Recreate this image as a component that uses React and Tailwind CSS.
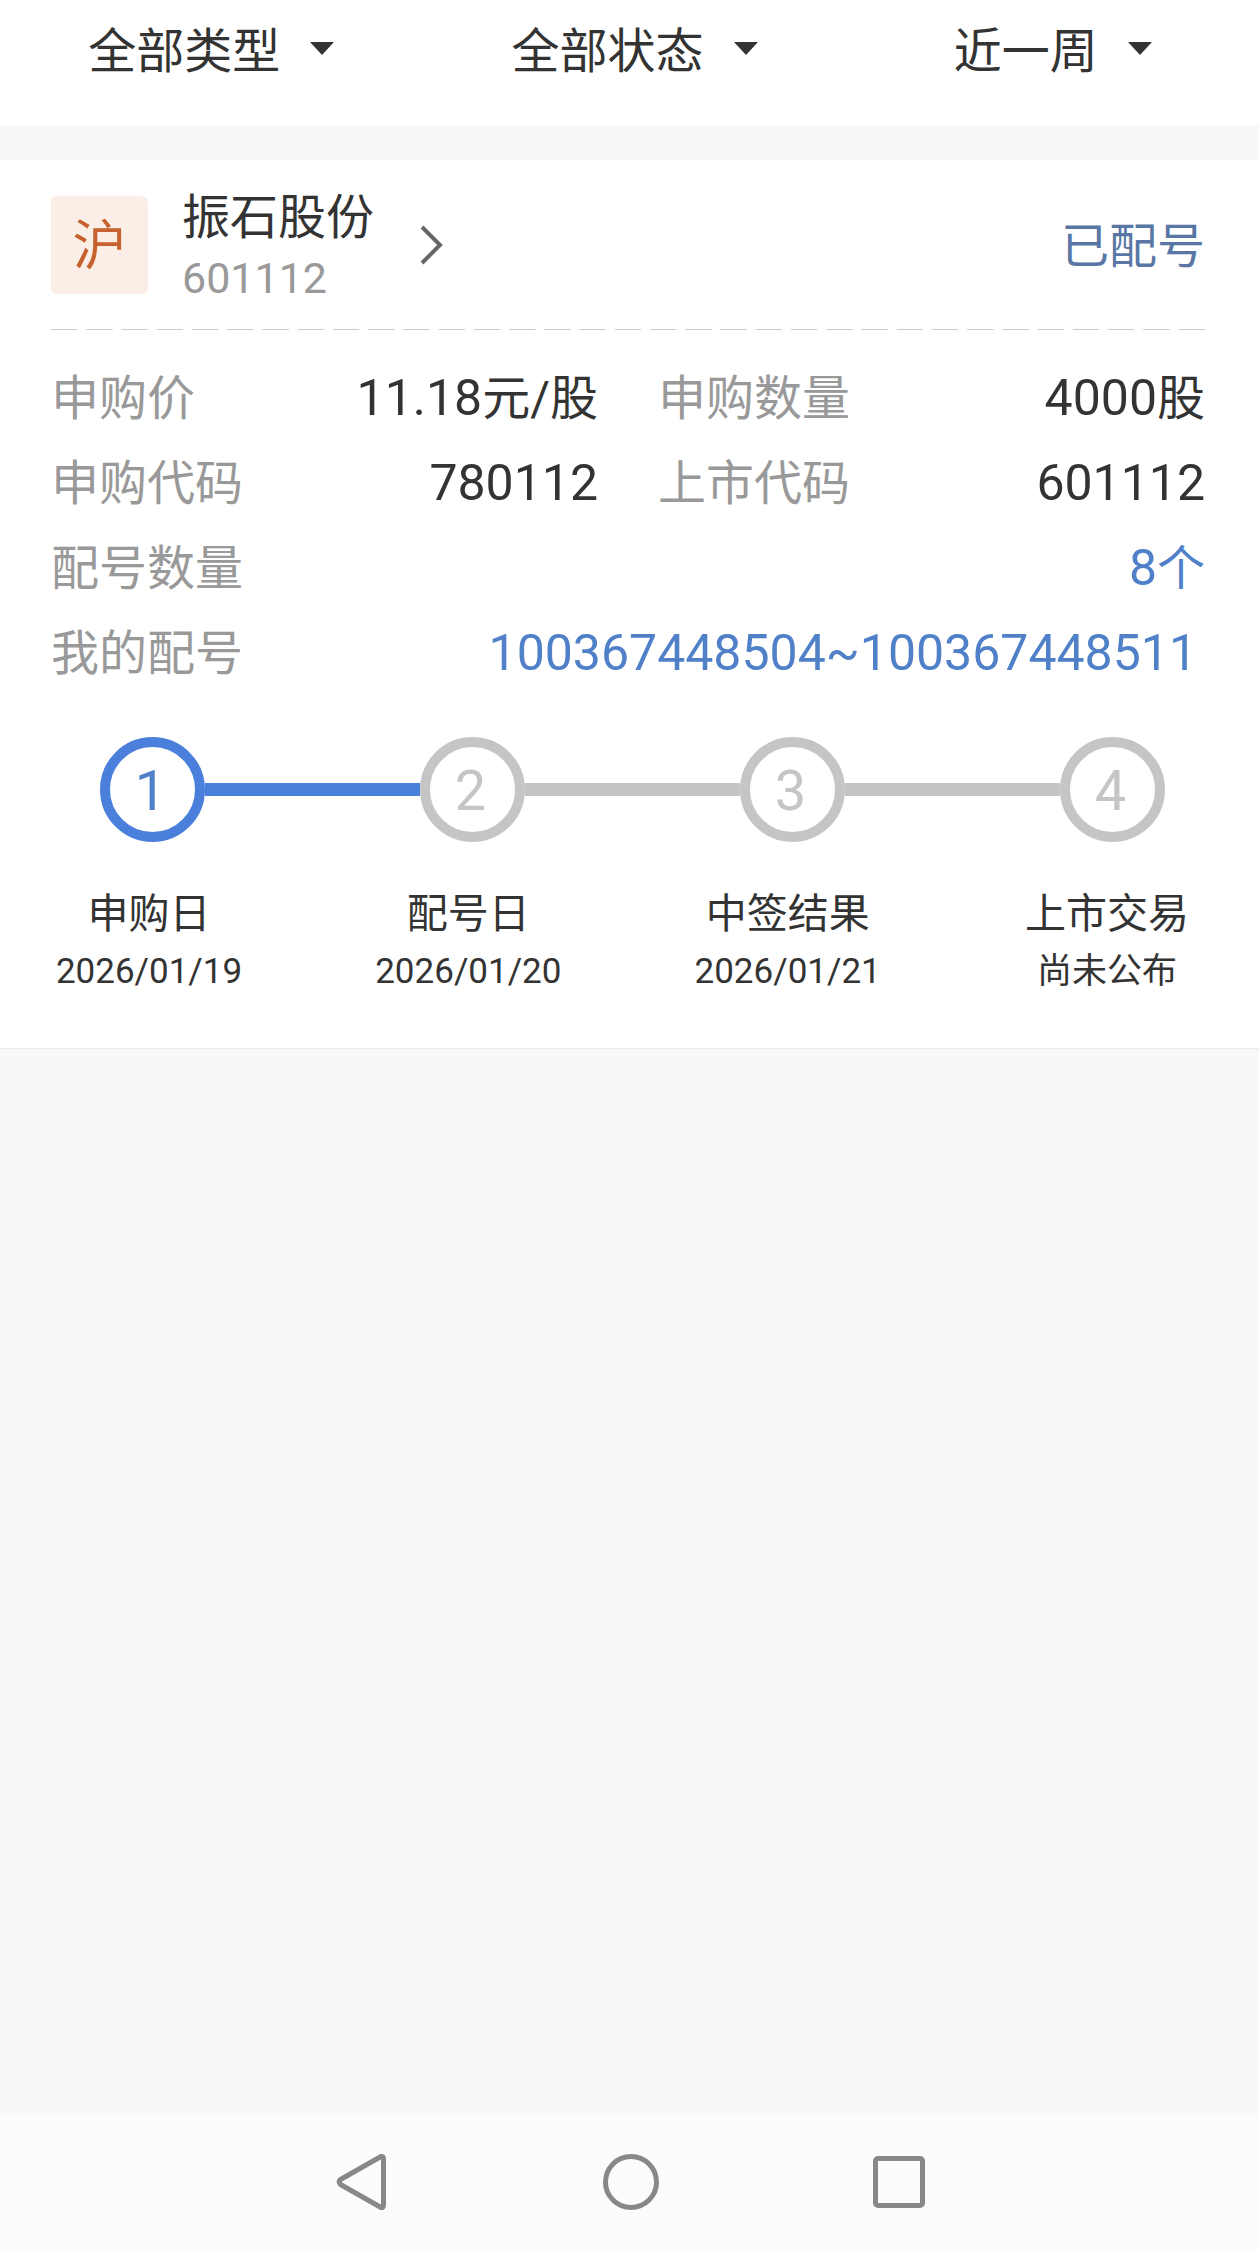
import React, { useState } from 'react'

const FILTERS = [
  { id: 'type', label: '类型', options: ['全部类型', '新股', '新债'] },
  { id: 'status', label: '状态', options: ['全部状态', '已配号', '已中签'] },
  { id: 'range', label: '时间', options: ['近一周', '近一月', '近一年'] },
]

const DETAILS = [
  { label: '申购价', value: '11.18', unit: '元/股' },
  { label: '申购数量', value: '4000', unit: '股' },
  { label: '申购代码', value: '780112' },
  { label: '上市代码', value: '601112' },
]

const STEPS = [
  { title: '申购日', date: '2026/01/19', done: true },
  { title: '配号日', date: '2026/01/20' },
  { title: '中签结果', date: '2026/01/21' },
  { title: '上市交易', date: '尚未公布' },
]

/**
 * FilterSelect - Borderless drop-down with a solid caret
 */
function FilterSelect({ id, label, options }) {
  const [value, setValue] = useState(options[0])

  return (
    <div className="relative">
      <select
        id={id}
        aria-label={label}
        value={value}
        onChange={(e) => setValue(e.target.value)}
        className="block field-sizing-content appearance-none bg-transparent pr-[54px] text-[48px] leading-[60px] text-[#333333] outline-none"
      >
        {options.map((option) => (
          <option key={option}>{option}</option>
        ))}
      </select>
      <svg
        className="pointer-events-none absolute right-0 top-5 h-[13px] w-6"
        viewBox="0 0 24 13"
        fill="#333333"
        aria-hidden="true"
      >
        <path d="M0 0H24L12 13Z" />
      </svg>
    </div>
  )
}

/**
 * DetailRow - Label on the left, value and unit on the right
 */
function DetailRow({ label, value, unit, wide = false, valueClass = 'text-[#333333]' }) {
  return (
    <div className={`flex items-center justify-between ${wide ? 'col-span-2' : ''}`}>
      <dt className="text-[48px] text-[#999999]">{label}</dt>
      <dd className={`text-[50px] ${valueClass}`}>
        {value}
        {unit && <span className="text-[48px]">{unit}</span>}
      </dd>
    </div>
  )
}

/**
 * StepTrack - Numbered circles joined by bars, with captions underneath
 */
function StepTrack({ steps }) {
  return (
    <div className="mt-[41px]">
      <div className="flex items-center pl-[49px] pr-10">
        {steps.map((step, idx) => (
          <React.Fragment key={step.title}>
            <span
              className={`flex size-[105px] shrink-0 items-center justify-center rounded-full border-10 pt-0.5 pr-1 text-[56px] leading-none ${
                step.done ? 'border-[#4a7fdb] text-[#4f80c8]' : 'border-[#c5c5c5] text-[#c5c5c5]'
              }`}
            >
              {idx + 1}
            </span>
            {idx < steps.length - 1 && (
              <span className={`h-[13px] flex-1 ${step.done ? 'bg-[#4a7fdb]' : 'bg-[#c5c5c5]'}`} />
            )}
          </React.Fragment>
        ))}
      </div>
      <ol className="mt-11 flex justify-between text-center text-[#333333]">
        {steps.map((step) => (
          <li key={step.title} className="w-[196px]">
            <p className="text-[41px] leading-[56px]">{step.title}</p>
            <p className="text-[35px] leading-[60px]">{step.date}</p>
          </li>
        ))}
      </ol>
    </div>
  )
}

function SubscriptionCard() {
  return (
    <article className="border-b border-[#e8eaec] bg-white pb-[46px] pl-[51px] pr-[54px]">
      <header className="flex items-center justify-between pt-[22px] pb-[21px]">
        <a href="#detail" className="flex items-center">
          <span className="flex h-[98px] w-[97px] items-center justify-center rounded-md bg-[#fbeee6] pt-1 text-[54px] leading-none text-[#c5622d]">
            沪
          </span>
          <span className="ml-[34px] flex flex-col pt-1.5 leading-[60px]">
            <span className="text-[48px] text-[#333333]">振石股份</span>
            <span className="text-[43px] text-[#999999]">601112</span>
          </span>
          <svg className="ml-[46px] h-10 w-6" viewBox="0 0 24 40" fill="none" stroke="#666666" strokeWidth="4" aria-hidden="true">
            <path d="M2 2L20 20L2 38" />
          </svg>
        </a>
        <span className="pt-1 text-[48px] leading-[60px] text-[#5877a5]">已配号</span>
      </header>

      <div className="-mr-[9px] h-px bg-[linear-gradient(90deg,#cccccc_74%,transparent_74%)] bg-size-[35px_1px] [background-repeat:round]" />

      <dl className="mt-[26px] grid grid-cols-2 gap-x-[60px] leading-[85px]">
        {DETAILS.map((item) => (
          <DetailRow key={item.label} {...item} />
        ))}
        <DetailRow label="配号数量" value="8" unit="个" wide valueClass="text-[#4f80c8]" />
        <DetailRow label="我的配号" value="100367448504~100367448511" wide valueClass="pr-2 text-[#4f80c8]" />
      </dl>

      <StepTrack steps={STEPS} />
    </article>
  )
}

/**
 * SystemNav - Back, home and recents
 */
function SystemNav() {
  return (
    <nav className="grid h-34 grid-cols-3 place-items-center bg-[#fcfcfc] px-[18%]">
      <button type="button" aria-label="返回">
        <svg className="size-15" viewBox="0 0 60 60" fill="none" stroke="#888888" strokeWidth="5" strokeLinejoin="round" aria-hidden="true">
          <path d="M9.5 27.5Q7 30 9.5 32.5L50 55.5Q52.500 56 52.500 53V7Q52.500 4 50 4.500Z" />
        </svg>
      </button>
      <button type="button" aria-label="主页">
        <svg className="size-15" viewBox="0 0 60 60" fill="none" stroke="#888888" strokeWidth="5" aria-hidden="true">
          <circle cx="31" cy="30" r="25.500" />
        </svg>
      </button>
      <button type="button" aria-label="最近任务">
        <svg className="size-15" viewBox="0 0 60 60" fill="none" stroke="#888888" strokeWidth="5" aria-hidden="true">
          <rect x="7.500" y="6.500" width="47" height="47" rx="2.500" />
        </svg>
      </button>
    </nav>
  )
}

export default function App() {
  return (
    <div className="flex min-h-screen flex-col bg-[#f6f8fa] font-['Roboto','Noto_Sans_CJK_SC',sans-serif]">
      {/* the last column is narrower, its label is one character shorter */}
      <div className="grid grid-cols-[211fr_212fr_206fr] justify-items-center bg-white pt-[22px] pb-[43px]">
        {FILTERS.map((filter) => (
          <FilterSelect key={filter.id} {...filter} />
        ))}
      </div>
      <main className="flex-1 pt-[35px]">
        <SubscriptionCard />
      </main>
      <SystemNav />
    </div>
  )
}
